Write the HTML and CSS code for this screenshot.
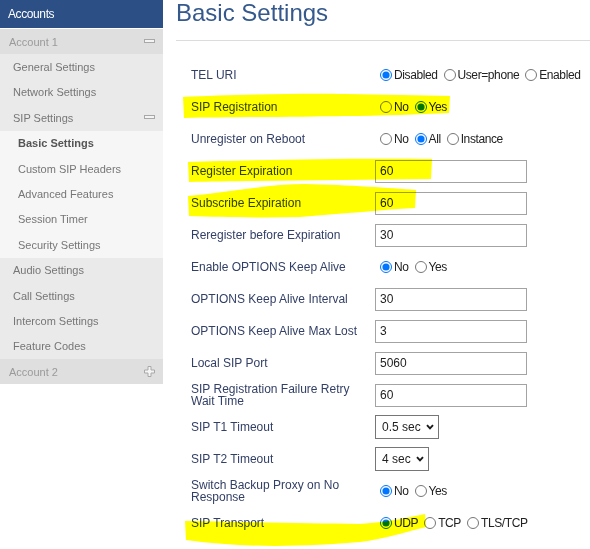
FILE: index.html
```html
<!DOCTYPE html>
<html lang="en">
<head>
<meta charset="utf-8">
<title>Basic Settings</title>
<link rel="stylesheet" href="styles.css">
</head>
<body>
<div class="page">
  <nav class="side">
    <div class="side-head">Accounts</div>
    <div class="acct">Account 1
      <svg class="ico" width="11" height="5" viewBox="0 0 11 5"><rect x="0.5" y="0.5" width="10" height="3" fill="#f4f4f4" stroke="#a8a8a8"/></svg>
    </div>
    <div class="item">General Settings</div>
    <div class="item">Network Settings</div>
    <div class="item">SIP Settings
      <svg class="ico" width="11" height="5" viewBox="0 0 11 5"><rect x="0.5" y="0.5" width="10" height="3" fill="#f4f4f4" stroke="#a8a8a8"/></svg>
    </div>
    <div class="item sub active">Basic Settings</div>
    <div class="item sub">Custom SIP Headers</div>
    <div class="item sub">Advanced Features</div>
    <div class="item sub">Session Timer</div>
    <div class="item sub">Security Settings</div>
    <div class="item">Audio Settings</div>
    <div class="item">Call Settings</div>
    <div class="item">Intercom Settings</div>
    <div class="item">Feature Codes</div>
    <div class="acct">Account 2
      <svg class="ico" width="11" height="11" viewBox="0 0 11 11"><path d="M4 0.5H7V4H10.5V7H7V10.5H4V7H0.5V4H4Z" fill="#f4f4f4" stroke="#a8a8a8"/></svg>
    </div>
  </nav>

  <main class="main">
    <h1 class="title">Basic Settings</h1>
    <div class="rule"></div>
    <form class="form">
      <div class="row">
        <span class="lbl">TEL URI</span>
        <div class="val">
          <label class="opt"><input type="radio" name="tel" checked>Disabled</label>
          <label class="opt"><input type="radio" name="tel">User=phone</label>
          <label class="opt"><input type="radio" name="tel">Enabled</label>
        </div>
      </div>
      <div class="row">
        <span class="lbl">SIP Registration</span>
        <div class="val">
          <label class="opt"><input type="radio" name="reg">No</label>
          <label class="opt"><input type="radio" name="reg" checked>Yes</label>
        </div>
      </div>
      <div class="row">
        <span class="lbl">Unregister on Reboot</span>
        <div class="val">
          <label class="opt"><input type="radio" name="unreg">No</label>
          <label class="opt"><input type="radio" name="unreg" checked>All</label>
          <label class="opt"><input type="radio" name="unreg">Instance</label>
        </div>
      </div>
      <div class="row">
        <span class="lbl">Register Expiration</span>
        <div class="val"><input class="txt" type="text" value="60"></div>
      </div>
      <div class="row">
        <span class="lbl">Subscribe Expiration</span>
        <div class="val"><input class="txt" type="text" value="60"></div>
      </div>
      <div class="row">
        <span class="lbl">Reregister before Expiration</span>
        <div class="val"><input class="txt" type="text" value="30"></div>
      </div>
      <div class="row">
        <span class="lbl">Enable OPTIONS Keep Alive</span>
        <div class="val">
          <label class="opt"><input type="radio" name="opt" checked>No</label>
          <label class="opt"><input type="radio" name="opt">Yes</label>
        </div>
      </div>
      <div class="row">
        <span class="lbl">OPTIONS Keep Alive Interval</span>
        <div class="val"><input class="txt" type="text" value="30"></div>
      </div>
      <div class="row">
        <span class="lbl">OPTIONS Keep Alive Max Lost</span>
        <div class="val"><input class="txt" type="text" value="3"></div>
      </div>
      <div class="row">
        <span class="lbl">Local SIP Port</span>
        <div class="val"><input class="txt" type="text" value="5060"></div>
      </div>
      <div class="row">
        <span class="lbl">SIP Registration Failure Retry Wait Time</span>
        <div class="val"><input class="txt" type="text" value="60"></div>
      </div>
      <div class="row">
        <span class="lbl">SIP T1 Timeout</span>
        <div class="val">
          <div class="sel">
            <select><option selected>0.5 sec</option><option>1 sec</option><option>2 sec</option></select>
            <svg class="chev" width="8" height="6" viewBox="0 0 8 6"><path d="M1 1.2L4 4.4L7 1.2" fill="none" stroke="#1a1a1a" stroke-width="1.9"/></svg>
          </div>
        </div>
      </div>
      <div class="row">
        <span class="lbl">SIP T2 Timeout</span>
        <div class="val">
          <div class="sel">
            <select><option>2 sec</option><option selected>4 sec</option><option>8 sec</option></select>
            <svg class="chev" width="8" height="6" viewBox="0 0 8 6"><path d="M1 1.2L4 4.4L7 1.2" fill="none" stroke="#1a1a1a" stroke-width="1.9"/></svg>
          </div>
        </div>
      </div>
      <div class="row">
        <span class="lbl">Switch Backup Proxy on No Response</span>
        <div class="val">
          <label class="opt"><input type="radio" name="sw" checked>No</label>
          <label class="opt"><input type="radio" name="sw">Yes</label>
        </div>
      </div>
      <div class="row">
        <span class="lbl">SIP Transport</span>
        <div class="val">
          <label class="opt"><input type="radio" name="tr" checked>UDP</label>
          <label class="opt"><input type="radio" name="tr">TCP</label>
          <label class="opt"><input type="radio" name="tr">TLS/TCP</label>
        </div>
      </div>
    </form>
  </main>

  <svg class="marks" width="590" height="549" viewBox="0 0 590 549">
    <path d="M183 97C230 95 300 93 345 94C385 95 420 95 450 96L449 113C420 114 380 116 345 116C300 117 230 117 184 118Z" fill="#ffff00"/>
    <path d="M188 162C250 160 350 158 432 159L431 179C350 180 250 181 189 182Z" fill="#ffff00"/>
    <path d="M188 196C230 192 270 184 305 184C350 185 390 188 416 190L415 208C380 210 340 214 300 217C260 218 220 217 189 216Z" fill="#ffff00"/>
    <path d="M185 521C240 522 310 523 360 524C390 522 410 517 425 514L426 527C405 532 385 539 360 542C310 546 250 549 186 540Z" fill="#ffff00"/>
  </svg>
</div>
</body>
</html>
```
FILE: styles.css
```css
html, body {
  margin: 0;
  padding: 0;
  background: #ffffff;
}

body {
  font-family: "Liberation Sans", Arial, sans-serif;
}

.page {
  position: relative;
  display: flex;
  align-items: flex-start;
  width: 590px;
  height: 549px;
  overflow: hidden;
}

/* ---------- sidebar ---------- */
.side {
  flex: 0 0 163px;
  display: flex;
  flex-direction: column;
  font-size: 11px;
}

.side-head {
  height: 28px;
  margin-bottom: 1px;
  padding-left: 8px;
  display: flex;
  align-items: center;
  background: #2c4f86;
  color: #ffffff;
  font-size: 12px;
  letter-spacing: -0.4px;
}

.acct,
.item {
  height: 25.4px;
  display: flex;
  align-items: center;
  justify-content: space-between;
  box-sizing: border-box;
  padding-right: 8px;
}

.acct {
  padding-left: 9px;
  background: #dfdfdf;
  color: #9a9a9a;
}

.item {
  padding-left: 13px;
  background: #eaeaea;
  color: #767676;
}

.item.sub {
  padding-left: 18px;
  background: #f6f6f6;
}

.item.sub.active {
  font-weight: bold;
  color: #555555;
}

.ico {
  display: block;
}

/* ---------- main ---------- */
.main {
  flex: 1 1 auto;
  min-width: 0;
  margin-left: 13px;
}

.title {
  margin: 0;
  font-size: 24px;
  line-height: 25px;
  font-weight: normal;
  color: #35598c;
}

.rule {
  margin-top: 15px;
  border-top: 1px solid #dcdcdc;
}

.form {
  margin: 18px 0 0;
}

.row {
  height: 32px;
  display: flex;
  align-items: center;
  padding-left: 15px;
}

.lbl {
  flex: 0 0 184px;
  box-sizing: border-box;
  padding-right: 12px;
  font-size: 12px;
  line-height: 12px;
  color: #323f66;
}

.val {
  display: flex;
  align-items: center;
  font-size: 12px;
  color: #222222;
}

.opt {
  display: flex;
  align-items: center;
  margin-right: 1px;
  letter-spacing: -0.4px;
}

.opt input {
  width: 12px;
  height: 12px;
  margin: 0 2px 0 5px;
}

.txt {
  width: 152px;
  height: 23px;
  margin: 0;
  box-sizing: border-box;
  border: 1px solid #a3a3a3;
  border-radius: 0;
  padding: 0 4px;
  font-family: "Liberation Sans", Arial, sans-serif;
  font-size: 12px;
  color: #222222;
  background: #ffffff;
}

.sel {
  height: 24px;
  box-sizing: border-box;
  display: inline-flex;
  align-items: center;
  gap: 5px;
  padding: 0 4px 0 6px;
  border: 1px solid #767676;
  background: #ffffff;
}

.sel select {
  appearance: none;
  -webkit-appearance: none;
  border: 0;
  margin: 0;
  padding: 0;
  background: transparent;
  font-family: "Liberation Sans", Arial, sans-serif;
  font-size: 12px;
  color: #222222;
  outline: none;
}

.chev {
  display: block;
}

/* ---------- highlighter marks ---------- */
.marks {
  position: absolute;
  left: 0;
  top: 0;
  pointer-events: none;
  mix-blend-mode: multiply;
}
```
